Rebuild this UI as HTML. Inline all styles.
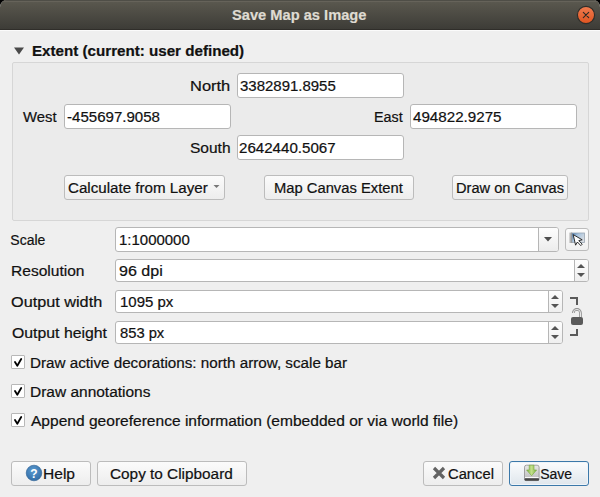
<!DOCTYPE html>
<html><head><meta charset="utf-8">
<style>
*{margin:0;padding:0;box-sizing:border-box}
html,body{width:600px;height:497px;overflow:hidden;background:#000}
body{font-family:"Liberation Sans",sans-serif;font-size:14px;color:#111;position:relative}
.dlg{position:absolute;left:0;top:0;width:600px;height:497px;background:#efefef;border-radius:7px 7px 0 0;overflow:hidden}
.tb{position:absolute;left:0;top:0;width:600px;height:30px;background:linear-gradient(#5c5a51,#57554c 15%,#3d3c37);border-bottom:1px solid #302e2a;box-shadow:inset 0 1px 0 #4f4e47,inset 0 2px 0 #66635a}
.tbline{position:absolute;left:0;top:30px;width:600px;height:1px;background:#fbfbfb}
.t{position:absolute;line-height:16px;white-space:nowrap;transform-origin:0 0;-webkit-text-stroke-width:0.2px}
.b{font-weight:bold}
.grp{position:absolute;left:12px;top:62px;width:577px;height:159px;border:1px solid #d6d6d6;border-radius:2px;background:#ebebeb}
.inp{position:absolute;background:#fff;border:1px solid #b6b6b6;border-radius:3px;height:25px}
.sp{height:23px}
.dd{position:absolute;right:0;top:0;bottom:0;width:20px;border-left:1px solid #b6b6b6;background:linear-gradient(#fdfdfd,#ececec);border-radius:0 2px 2px 0}
.spb{position:absolute;right:0;top:0;bottom:0;width:14px;border-left:1px solid #b6b6b6;background:linear-gradient(#fdfdfd,#efefef);border-radius:0 2px 2px 0}
.btn{position:absolute;height:25px;border:1px solid #bcbcbc;border-radius:3px;background:linear-gradient(#fbfbfb,#ededed)}
.chk{position:absolute;left:11px;width:14px;height:14px;background:#fff;border:1px solid #b8b8b8;border-radius:1px}
svg{position:absolute}
</style></head><body>
<div class="dlg">
  <div class="tb"></div>
  <div class="tbline"></div>
  <svg style="left:576px;top:5px" width="20" height="20" viewBox="0 0 20 20">
    <defs><linearGradient id="cg" x1="0" y1="0" x2="0" y2="1"><stop offset="0" stop-color="#f07c50"/><stop offset="1" stop-color="#df5420"/></linearGradient></defs>
    <circle cx="10" cy="10" r="8.6" fill="url(#cg)" stroke="#302e2a" stroke-width="1.2"/>
    <path d="M7.3 7.3 L12.7 12.7 M12.7 7.3 L7.3 12.7" stroke="#2b2a26" stroke-width="1.1" stroke-linecap="round"/><circle cx="10" cy="10" r="0.8" fill="#2b2a26"/>
  </svg>

  <svg style="left:13px;top:46px" width="12" height="10"><path d="M1 1.5 L11 1.5 L6 8.5 Z" fill="#4a4a4a"/></svg>

  <div class="grp"></div>
  <div class="inp" style="left:237px;top:73px;width:167px"></div>
  <div class="inp" style="left:64px;top:104px;width:167px"></div>
  <div class="inp" style="left:410px;top:104px;width:167px"></div>
  <div class="inp" style="left:237px;top:135px;width:167px"></div>

  <div class="btn" style="left:64px;top:175px;width:161px"></div>
  <svg style="left:213px;top:184px" width="8" height="5"><path d="M0.5 1 L6.5 1 L3.5 4 Z" fill="#777"/></svg>
  <div class="btn" style="left:264px;top:175px;width:150px"></div>
  <div class="btn" style="left:452px;top:175px;width:116px"></div>

  <div class="inp" style="left:115px;top:227px;width:444px">
    <div class="dd"><svg style="left:5px;top:9px" width="8" height="5"><path d="M0 0 L8 0 L4 4.5 Z" fill="#4d4d4d"/></svg></div></div>
  <div class="btn" style="left:565px;top:228px;width:24px;height:23px;background:linear-gradient(#fcfcfc,#f0f0f0)"></div>
  <svg style="left:568px;top:231px" width="18" height="18" viewBox="0 0 18 18">
    <defs><linearGradient id="sg" x1="0" y1="0" x2="1" y2="0.6"><stop offset="0" stop-color="#3f74ad"/><stop offset="0.45" stop-color="#a9c4de"/><stop offset="1" stop-color="#d9dde2"/></linearGradient>
    <linearGradient id="lb" x1="0" y1="0" x2="1" y2="0"><stop offset="0" stop-color="#d0d0d0"/><stop offset="1" stop-color="#8c8c8c"/></linearGradient></defs>
    <rect x="3.5" y="2" width="13" height="9.5" fill="url(#sg)" stroke="#9aa6b2" stroke-width="0.8"/>
    <rect x="1.2" y="1.6" width="3" height="10.4" fill="url(#lb)"/>
    <path d="M5.2 3.6 L14.2 8.8 L10.8 9.6 L14.2 13.2 L12.8 14.6 L9.4 11 L7.6 14.2 Z" fill="#fff" stroke="#1a1a1a" stroke-width="0.9" stroke-linejoin="round"/>
  </svg>

  <div class="inp sp" style="left:115px;top:259px;width:474px">
    <div class="spb"><svg style="left:2px;top:4px" width="9" height="14"><path d="M0 4 L8 4 L4 0 Z M0 9 L8 9 L4 13 Z" fill="#555"/></svg></div></div>
  <div class="inp sp" style="left:115px;top:290px;width:448px">
    <div class="spb"><svg style="left:2px;top:4px" width="9" height="14"><path d="M0 4 L8 4 L4 0 Z M0 9 L8 9 L4 13 Z" fill="#555"/></svg></div></div>
  <div class="inp sp" style="left:115px;top:321px;width:448px">
    <div class="spb"><svg style="left:2px;top:4px" width="9" height="14"><path d="M0 4 L8 4 L4 0 Z M0 9 L8 9 L4 13 Z" fill="#555"/></svg></div></div>

  <!-- lock -->
  <svg style="left:568px;top:294px" width="20" height="46" viewBox="0 0 20 46">
    <path d="M2 4 L9 4 L9 11" fill="none" stroke="#5a5a5a" stroke-width="2"/>
    <path d="M2 41 L9 41 L9 35" fill="none" stroke="#5a5a5a" stroke-width="2"/>
    <path d="M12.5 23.5 L12.5 19 A3.6 3.6 0 0 0 5.3 19" fill="none" stroke="#8e8e8e" stroke-width="2.6"/>
    <path d="M12.5 23.5 L12.5 19 A3.6 3.6 0 0 0 5.3 19" fill="none" stroke="#f2f2f2" stroke-width="0.9"/>
    <rect x="3" y="23" width="12" height="8" rx="2" fill="#5a5a5a"/>
  </svg>

  <div class="chk" style="top:355px"><svg style="left:2px;top:2px" width="10" height="10" viewBox="0 0 10 10"><path d="M1 4 L3.3 7.8 L7.2 1" fill="none" stroke="#000" stroke-width="1.8" stroke-linecap="round" stroke-linejoin="round"/></svg></div>
  <div class="chk" style="top:384px"><svg style="left:2px;top:2px" width="10" height="10" viewBox="0 0 10 10"><path d="M1 4 L3.3 7.8 L7.2 1" fill="none" stroke="#000" stroke-width="1.8" stroke-linecap="round" stroke-linejoin="round"/></svg></div>
  <div class="chk" style="top:413px"><svg style="left:2px;top:2px" width="10" height="10" viewBox="0 0 10 10"><path d="M1 4 L3.3 7.8 L7.2 1" fill="none" stroke="#000" stroke-width="1.8" stroke-linecap="round" stroke-linejoin="round"/></svg></div>

  <div class="btn" style="left:11px;top:461px;width:80px"></div>
  <svg style="left:25px;top:464px" width="18" height="18" viewBox="0 0 18 18">
    <defs><radialGradient id="hg" cx="0.45" cy="0.35" r="0.7"><stop offset="0" stop-color="#5a9ad0"/><stop offset="1" stop-color="#2f6aa4"/></radialGradient></defs>
    <circle cx="9" cy="9" r="7.8" fill="url(#hg)" stroke="#2c5f92" stroke-width="0.6"/>
    <text x="9" y="13.5" text-anchor="middle" font-family="Liberation Sans" font-size="12" font-weight="bold" fill="#fff">?</text>
  </svg>
  <div class="btn" style="left:97px;top:461px;width:150px"></div>
  <div class="btn" style="left:423px;top:461px;width:80px"></div>
  <svg style="left:432px;top:466px" width="14" height="14" viewBox="0 0 14 14"><path d="M2 2 L12 12 M12 2 L2 12" stroke="#636363" stroke-width="3.2" stroke-linecap="butt"/></svg>
  <div class="btn" style="left:509px;top:461px;width:80px;border-color:#3b78a9;background:linear-gradient(#fbfcfd,#dfe6ec);box-shadow:inset 0 0 0 1px #eef4f9"></div>
  <svg style="left:523px;top:464px" width="18" height="18" viewBox="0 0 18 18">
    <defs><linearGradient id="dg" x1="0" y1="0" x2="0" y2="1"><stop offset="0" stop-color="#e8e8e8"/><stop offset="1" stop-color="#b9b9b9"/></linearGradient>
    <linearGradient id="ag" x1="0" y1="0" x2="1" y2="0"><stop offset="0" stop-color="#7db443"/><stop offset="0.5" stop-color="#c3e08a"/><stop offset="1" stop-color="#7db443"/></linearGradient></defs>
    <rect x="1.5" y="1.2" width="14.6" height="15.4" rx="2" fill="url(#dg)" stroke="#8e8e8e" stroke-width="0.8"/>
    <rect x="2" y="13" width="13.6" height="1" fill="#fafafa"/>
    <rect x="1.5" y="14.2" width="14.6" height="2.5" rx="1" fill="#474747"/>
    <path d="M6.2 1.2 L11 1.2 L11 6 L13.6 6 L8.6 11.7 L3.6 6 L6.2 6 Z" fill="url(#ag)" stroke="#76a83c" stroke-width="0.6"/>
  </svg>

<div class="t b" style="left:232.00px;top:7px;transform:scaleX(1.0469);color:#dfdbd2;-webkit-text-stroke-color:#dfdbd2">Save Map as Image</div>
<div class="t b" style="left:31.92px;top:43px;transform:scaleX(1.0821);color:#111;-webkit-text-stroke-color:#111">Extent (current: user defined)</div>
<div class="t" style="left:190.32px;top:78px;transform:scaleX(1.1758);color:#111;-webkit-text-stroke-color:#111">North</div>
<div class="t" style="left:240.40px;top:78px;transform:scaleX(1.0697);color:#111;-webkit-text-stroke-color:#111">3382891.8955</div>
<div class="t" style="left:23.30px;top:109px;transform:scaleX(1.0594);color:#111;-webkit-text-stroke-color:#111">West</div>
<div class="t" style="left:66.60px;top:109px;transform:scaleX(1.0756);color:#111;-webkit-text-stroke-color:#111">-455697.9058</div>
<div class="t" style="left:374.48px;top:109px;transform:scaleX(1.0222);color:#111;-webkit-text-stroke-color:#111">East</div>
<div class="t" style="left:413.00px;top:109px;transform:scaleX(1.0827);color:#111;-webkit-text-stroke-color:#111">494822.9275</div>
<div class="t" style="left:190.39px;top:140px;transform:scaleX(1.1086);color:#111;-webkit-text-stroke-color:#111">South</div>
<div class="t" style="left:239.42px;top:140px;transform:scaleX(1.0795);color:#111;-webkit-text-stroke-color:#111">2642440.5067</div>
<div class="t" style="left:67.92px;top:180px;transform:scaleX(1.0820);color:#111;-webkit-text-stroke-color:#111">Calculate from Layer</div>
<div class="t" style="left:273.95px;top:180px;transform:scaleX(1.0537);color:#111;-webkit-text-stroke-color:#111">Map Canvas Extent</div>
<div class="t" style="left:455.66px;top:180px;transform:scaleX(1.0441);color:#111;-webkit-text-stroke-color:#111">Draw on Canvas</div>
<div class="t" style="left:10.30px;top:232px;transform:scaleX(1.0000);color:#111;-webkit-text-stroke-color:#111">Scale</div>
<div class="t" style="left:118.63px;top:232px;transform:scaleX(1.0692);color:#111;-webkit-text-stroke-color:#111">1:1000000</div>
<div class="t" style="left:10.79px;top:263px;transform:scaleX(1.1109);color:#111;-webkit-text-stroke-color:#111">Resolution</div>
<div class="t" style="left:118.95px;top:263px;transform:scaleX(1.1472);color:#111;-webkit-text-stroke-color:#111">96 dpi</div>
<div class="t" style="left:11.30px;top:294px;transform:scaleX(1.1603);color:#111;-webkit-text-stroke-color:#111">Output width</div>
<div class="t" style="left:119.83px;top:294px;transform:scaleX(1.0694);color:#111;-webkit-text-stroke-color:#111">1095 px</div>
<div class="t" style="left:11.70px;top:325px;transform:scaleX(1.1298);color:#111;-webkit-text-stroke-color:#111">Output height</div>
<div class="t" style="left:120.10px;top:325px;transform:scaleX(1.0524);color:#111;-webkit-text-stroke-color:#111">853 px</div>
<div class="t" style="left:29.91px;top:355px;transform:scaleX(1.0866);color:#111;-webkit-text-stroke-color:#111">Draw active decorations: north arrow, scale bar</div>
<div class="t" style="left:29.89px;top:384px;transform:scaleX(1.1056);color:#111;-webkit-text-stroke-color:#111">Draw annotations</div>
<div class="t" style="left:30.60px;top:413px;transform:scaleX(1.1109);color:#111;-webkit-text-stroke-color:#111">Append georeference information (embedded or via world file)</div>
<div class="t" style="left:42.89px;top:466px;transform:scaleX(1.1111);color:#111;-webkit-text-stroke-color:#111">Help</div>
<div class="t" style="left:110.15px;top:466px;transform:scaleX(1.0955);color:#111;-webkit-text-stroke-color:#111">Copy to Clipboard</div>
<div class="t" style="left:447.70px;top:466px;transform:scaleX(1.0536);color:#111;-webkit-text-stroke-color:#111">Cancel</div>
<div class="t" style="left:540.25px;top:466px;transform:scaleX(1.0000);color:#111;-webkit-text-stroke-color:#111">Save</div>
</div>
</body></html>
